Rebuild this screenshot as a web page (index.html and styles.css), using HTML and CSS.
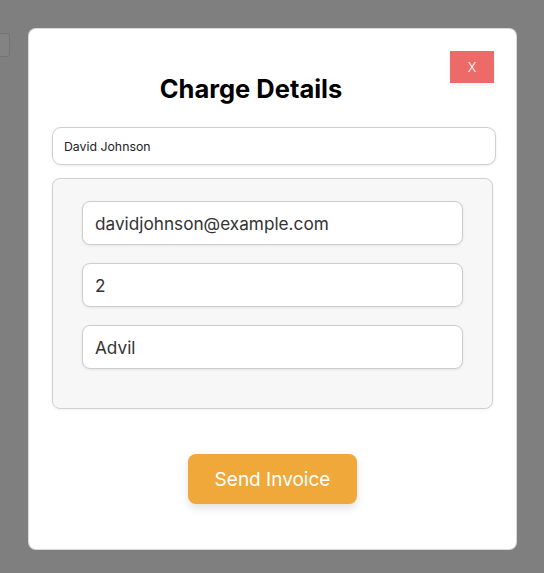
FILE: index.html
```html
<!DOCTYPE html>
<html>
<head>
<meta charset="utf-8">
<link rel="stylesheet" href="styles.css">
</head>
<body>
<div class="behind-box"></div>
<div class="overlay">
  <div class="modal">
    <div class="modal-header">
      <h2 class="title">Charge Details</h2>
      <button class="close-btn">X</button>
    </div>
    <div class="name-field">David Johnson</div>
    <div class="group">
      <div class="field">davidjohnson@example.com</div>
      <div class="field">2</div>
      <div class="field">Advil</div>
    </div>
    <div class="actions">
      <button class="send-btn">Send Invoice</button>
    </div>
  </div>
</div>
</body>
</html>
```

FILE: styles.css
```css
* { box-sizing: border-box; }
html, body {
  margin: 0;
  padding: 0;
  width: 544px;
  height: 573px;
  overflow: hidden;
  font-family: Inter, "Noto Sans", sans-serif;
  background: #7f7f7f;
}
.behind-box {
  position: absolute;
  left: -4px;
  top: 33px;
  width: 14px;
  height: 24px;
  border: 1px solid #737373;
  border-radius: 3px;
  background: #838383;
}
.overlay {
  position: absolute;
  inset: 0;
  padding: 29px 0 0 29px;
}
.modal {
  width: 487px;
  height: 520px;
  background: #fff;
  border-radius: 7px;
  padding: 22px 20px 0 23px;
  display: flex;
  flex-direction: column;
  box-shadow: 0 0 0 1px #d9d9d9;
}
.modal-header {
  display: flex;
  align-items: flex-start;
  height: 76px;
}
.title {
  flex: 1;
  margin: 23px 0 0 0;
  text-align: center;
  font-size: 25.5px;
  font-weight: 700;
  color: #000;
  line-height: 30px;
}
.close-btn {
  width: 44px;
  height: 32px;
  margin-right: 2px;
  border: none;
  background: #ec6a67;
  color: #fff;
  font-family: Inter, "Noto Sans", sans-serif;
  font-size: 13px;
  font-weight: 300;
  padding: 0;
  box-shadow: 0 3px 6px rgba(0,0,0,0.06);
}
.name-field {
  width: 444px;
  height: 38px;
  border: 1px solid #cfcfcf;
  border-radius: 9px;
  padding: 0 11px;
  display: flex;
  align-items: center;
  font-size: 12.3px;
  color: #222;
  box-shadow: 0 1px 3px rgba(0,0,0,0.08);
}
.group {
  margin-top: 13px;
  width: 441px;
  height: 231px;
  background: #f7f7f7;
  border: 1px solid #d0d0d0;
  border-radius: 8px;
  padding: 22px 29px 0 29px;
  display: flex;
  flex-direction: column;
  gap: 18px;
  box-shadow: 0 1px 3px rgba(0,0,0,0.06);
}
.field {
  height: 44px;
  width: 381px;
  background: #fff;
  border: 1px solid #cdcdcd;
  border-radius: 8px;
  padding: 0 12px;
  display: flex;
  align-items: center;
  font-size: 17.2px;
  color: #333;
  box-shadow: 0 1px 3px rgba(0,0,0,0.08);
}
.actions {
  margin-top: 45px;
  padding-left: 136px;
}
.send-btn {
  width: 169px;
  height: 50px;
  border: none;
  border-radius: 8px;
  background: #f0a83b;
  color: #fff;
  font-family: Inter, "Noto Sans", sans-serif;
  font-size: 19px;
  font-weight: 400;
  box-shadow: 0 4px 8px rgba(0,0,0,0.12);
}
```
